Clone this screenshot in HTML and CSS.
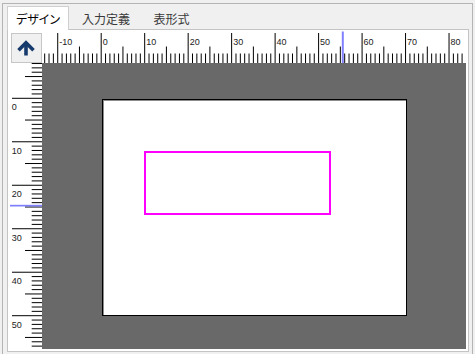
FILE: index.html
```html
<!DOCTYPE html>
<html lang="ja">
<head>
    <meta charset="UTF-8">
    <title>デザイン</title>
    <link rel="stylesheet" href="styles.css">
</head>
<body>
    <div class="window">
        <div class="tabs">
            <div class="tab active">デザイン</div>
            <div class="tab tab-input">入力定義</div>
            <div class="tab tab-table">表形式</div>
        </div>

        <div class="tab-page">
            <div class="designer">
                <div class="corner">
                    <button class="up-btn" title="上へ">
                        <svg width="29" height="28" viewBox="0 0 29 28">
                            <path d="M6.5 16.3 L14 8.8 L21.5 16.3" fill="none" stroke="#163b6c" stroke-width="3.6"/>
                            <path d="M14 10 L14 21.5" stroke="#163b6c" stroke-width="3.6"/>
                        </svg>
                    </button>
                </div>
                <svg class="ruler-top" id="rulerTop" width="424" height="33"></svg>
                <svg class="ruler-left" id="rulerLeft" width="32" height="286"></svg>
                <div class="canvas">
                    <div class="sheet">
                        <div class="shape"></div>
                    </div>
                </div>
            </div>
        </div>
    </div>

    <script src="ruler.js"></script>
</body>
</html>
```

FILE: styles.css
```css
html, body {
    margin: 0;
    height: 100%;
    overflow: hidden;
}
body {
    background: #f0f0f0;
    font-family: "Noto Sans CJK JP", "Liberation Sans", sans-serif;
}

.window {
    margin: 3px 2px 0 2px;
    height: 350px;
    border: 1px solid #b4b4b4;
    border-bottom: none;
    padding: 0 3px 0 4px;
    background: #f0f0f0;
}

.tabs {
    display: flex;
    height: 25px;
}
.tab {
    box-sizing: border-box;
    display: flex;
    align-items: center;
    justify-content: center;
    height: 24px;
    margin-top: 2px;
    font-size: 12px;
    color: #3a3a3a;
}
.tab.active {
    position: relative;
    z-index: 1;
    width: 62px;
    background: #ffffff;
    border: 1px solid #cfcfcf;
    border-bottom: none;
    color: #000000;
    font-feature-settings: "palt";
}
.tab-input {
    width: 74px;
}
.tab-table {
    width: 57px;
}

.tab-page {
    width: 462px;
    box-sizing: border-box;
    border: 1px solid #c4c4c4;
    background: #ffffff;
    padding: 0 2px 2px 2px;
}

.designer {
    display: grid;
    grid-template-columns: 32px 424px;
    grid-template-rows: 33px 286px;
}
.corner {
    background: #ffffff;
}
.up-btn {
    display: block;
    box-sizing: border-box;
    width: 31px;
    height: 30px;
    margin: 3px 0 0 1px;
    padding: 0;
    border: 1px solid #c6c6c6;
    background: #f0f0f0;
}
.up-btn svg {
    display: block;
}

.ruler-top,
.ruler-left {
    display: block;
    background: #ffffff;
    font-family: "Liberation Sans", Arial, sans-serif;
    font-size: 9px;
}

.canvas {
    position: relative;
    overflow: hidden;
    background: #696969;
}
.sheet {
    position: relative;
    box-sizing: border-box;
    width: 305px;
    height: 217px;
    margin: 36px 0 0 60px;
    background: #ffffff;
    border: 1px solid #000000;
    box-shadow: inset 1px 1px 0 rgba(0, 0, 0, .45);
}
.shape {
    position: absolute;
    left: 41px;
    top: 51px;
    width: 187px;
    height: 64px;
    box-sizing: border-box;
    border: 2px solid #ff00ff;
}
```

FILE: ruler.js
```js
// mm -> px on the design surface
const SCALE = 4.348;
const SVG_NS = 'http://www.w3.org/2000/svg';

function addLine( svg, x1, y1, x2, y2, color ) {
    const el = document.createElementNS( SVG_NS, 'line' );
    el.setAttribute( 'x1', x1 );
    el.setAttribute( 'y1', y1 );
    el.setAttribute( 'x2', x2 );
    el.setAttribute( 'y2', y2 );
    el.setAttribute( 'stroke', color || '#000' );
    el.setAttribute( 'stroke-width', '1' );
    svg.appendChild( el );
}

function addLabel( svg, x, y, text ) {
    const el = document.createElementNS( SVG_NS, 'text' );
    el.setAttribute( 'x', x );
    el.setAttribute( 'y', y );
    el.setAttribute( 'fill', '#222' );
    el.textContent = text;
    svg.appendChild( el );
}

function addMarker( svg, x, y, w, h ) {
    const el = document.createElementNS( SVG_NS, 'rect' );
    el.setAttribute( 'x', x );
    el.setAttribute( 'y', y );
    el.setAttribute( 'width', w );
    el.setAttribute( 'height', h );
    el.setAttribute( 'fill', '#8080ff' );
    svg.appendChild( el );
}

function drawTopRuler() {
    const svg = document.getElementById( 'rulerTop' );
    const origin = 59.2;
    for ( let u = -14; u <= 85; u++ ) {
        const x = origin + u * SCALE;
        if ( x < 0 || x > 424 ) continue;
        let top = 23.5;
        if ( u % 10 === 0 ) top = 3;
        else if ( u % 5 === 0 ) top = 16.5;
        addLine( svg, x, top, x, 33 );
        if ( u % 10 === 0 ) addLabel( svg, x + 1.5, 14.5, u );
    }
    // cursor position
    addMarker( svg, 299.8, 1.5, 2, 31.5 );
}

function drawLeftRuler() {
    const svg = document.getElementById( 'rulerLeft' );
    const origin = 35.3;
    for ( let u = -9; u <= 60; u++ ) {
        const y = origin + u * SCALE;
        if ( y < 0 || y > 286 ) continue;
        let left = 21.7;
        if ( u % 10 === 0 ) left = 2;
        else if ( u % 5 === 0 ) left = 15;
        addLine( svg, left, y, 32, y );
        if ( u % 10 === 0 ) addLabel( svg, 1.7, y + 11.8, u );
    }
    addMarker( svg, 0, 141.8, 32, 1.7 );
}

drawTopRuler();
drawLeftRuler();
```
